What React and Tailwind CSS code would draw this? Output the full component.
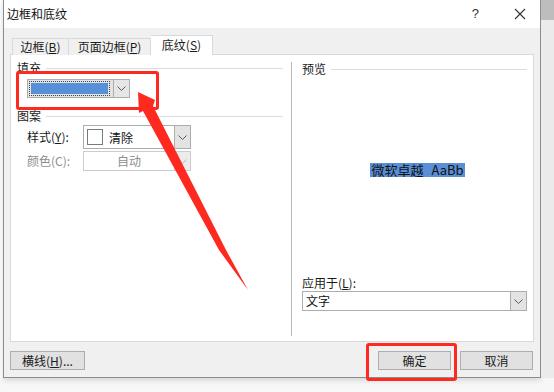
import React from "react";

const FONT = "font-['Noto_Sans_CJK_SC','Liberation_Sans',sans-serif]";

// small dropdown chevron
function Chevron({ disabled }) {
  return (
    <svg width="9" height="5" viewBox="0 0 9 5">
      <path
        d="M0.5 0.5 L4.5 4.5 L8.5 0.5"
        fill="none"
        stroke={disabled ? "#b8b8b8" : "#5a5a5a"}
        strokeWidth="1"
      />
    </svg>
  );
}

function ChevronBox({ disabled }) {
  return (
    <div
      className={`w-[16px] h-full flex items-center justify-center border-l ${
        disabled ? "border-[#d0d0d0] bg-[#ececec]" : "border-[#adadad] bg-[#e3e3e3]"
      }`}
    >
      <Chevron disabled={disabled} />
    </div>
  );
}

function GroupLabel({ children, lineRight }) {
  return (
    <div className="flex items-center h-[14px]">
      <span className="text-[12px] leading-[14px] text-[#1a1a1a]">{children}</span>
      <div className={`flex-1 h-px bg-[#dcdcdc] ml-[5px] ${lineRight}`} />
    </div>
  );
}

function Button({ children, width }) {
  return (
    <div
      className={`${width} h-[19px] bg-[#e1e1e1] border border-[#adadad] flex items-center justify-center text-[12px] leading-[14px] text-[#1a1a1a]`}
    >
      {children}
    </div>
  );
}

export default function App() {
  return (
    <div className={`relative w-[554px] h-[392px] overflow-hidden bg-[#f7f7f7] ${FONT}`}>
      <div className="flex h-[378px]">
        {/* page behind, left edge */}
        <div className="w-[3px] bg-white" />

        {/* Dialog */}
        <div className="w-[538px] h-[378px] flex flex-col border-l border-r border-b border-[#8c8c8c] bg-[#f0f0f0] shadow-[0_2px_6px_rgba(0,0,0,0.15)]">
          {/* Title bar */}
          <div className="h-[28px] bg-white flex items-center pl-[3px] pr-[14px] shrink-0">
            <span className="text-[12px] leading-[14px] text-[#111]">边框和底纹</span>
            <div className="flex-1" />
            <span className="text-[13px] leading-[14px] text-[#333] font-['Liberation_Sans',sans-serif] mr-[35px]">?</span>
            <svg width="12" height="12" viewBox="0 0 12 12">
              <path d="M1 1 L11 11 M11 1 L1 11" stroke="#333" strokeWidth="1.1" />
            </svg>
          </div>

          {/* Body */}
          <div className="flex-1 flex flex-col px-[6px]">
            {/* Tabs */}
            <div className="flex items-end ml-[2px] mt-[7px] h-[20px] -mb-px relative z-10">
              <div className="h-[17px] w-[57px] border border-b-0 border-[#d9d9d9] bg-[#f0f0f0] flex items-center justify-center text-[12px] leading-[14px] text-[#1a1a1a]">
                边框(<span className="underline">B</span>)
              </div>
              <div className="h-[17px] w-[82px] border border-b-0 border-l-0 border-[#d9d9d9] bg-[#f0f0f0] flex items-center justify-center text-[12px] leading-[14px] text-[#1a1a1a]">
                页面边框(<span className="underline">P</span>)
              </div>
              <div className="h-[20px] w-[62px] border border-b-0 border-l-0 border-[#d9d9d9] bg-white flex items-center justify-center text-[12px] leading-[14px] text-[#1a1a1a] pb-[2px]">
                底纹(<span className="underline">S</span>)
              </div>
            </div>

            {/* Panel */}
            <div className="h-[288px] bg-white border border-[#d9d9d9] flex">
              {/* Left column */}
              <div className="w-[280px] flex flex-col pl-[6px]">
                <div className="mt-[6px]">
                  <GroupLabel lineRight="mr-[8px]">填充</GroupLabel>
                </div>
                <div className="ml-[10px] mt-[4px] w-[103px] h-[19px] border border-[#adadad] bg-[#e3e3e3] flex items-stretch">
                  <div className="flex-1 m-px border border-dotted border-[#444] p-px">
                    <div className="w-full h-full bg-[#5590d9]" />
                  </div>
                  <div className="w-[16px] ml-[2px] flex items-center justify-center border-l border-[#adadad] bg-[#e6e6e6]">
                    <Chevron />
                  </div>
                </div>

                <div className="mt-[11px]">
                  <GroupLabel lineRight="mr-[8px]">图案</GroupLabel>
                </div>

                <div className="flex items-center ml-[10px] mt-[2px]">
                  <span className="w-[56px] text-[12px] leading-[14px] text-[#1a1a1a]">
                    样式(<span className="underline">Y</span>):
                  </span>
                  <div className="w-[108px] h-[24px] border border-[#adadad] bg-white flex items-stretch">
                    <div className="flex-1 flex items-center pl-[3px]">
                      <div className="w-[16px] h-[16px] border border-[#7a7a7a]" />
                      <span className="ml-[6px] mt-[2px] text-[12px] leading-[14px] text-[#111]">清除</span>
                    </div>
                    <ChevronBox />
                  </div>
                </div>

                <div className="flex items-center ml-[10px] mt-[2px]">
                  <span className="w-[56px] text-[12px] leading-[14px] text-[#8d8d8d]">颜色(C):</span>
                  <div className="w-[108px] h-[20px] border border-[#cccccc] bg-white flex items-stretch">
                    <div className="flex-1 flex items-center justify-center text-[12px] leading-[14px] text-[#8d8d8d]">
                      自动
                    </div>
                    <ChevronBox disabled />
                  </div>
                </div>
              </div>

              {/* Separator */}
              <div className="w-px bg-[#b9b9b9] mt-[7px] mb-[5px]" />

              {/* Right column */}
              <div className="flex-1 flex flex-col pl-[10px] pr-[6px]">
                <div className="mt-[7px]">
                  <GroupLabel lineRight="">预览</GroupLabel>
                </div>
                <div className="mt-[87px] flex justify-center pl-[6px]">
                  <span className="bg-[#5a8fd7] text-[13px] leading-[14px] text-[#111] px-px">
                    微软卓越<span className="inline-block w-[8px]" />AaBb
                  </span>
                </div>
                <div className="mt-[99px] text-[12px] leading-[14px] text-[#1a1a1a]">
                  应用于(<span className="underline">L</span>):
                </div>
                <div className="mt-px h-[20px] border border-[#adadad] bg-white flex items-stretch">
                  <div className="flex-1 flex items-center pl-[3px] text-[12px] leading-[14px] text-[#111]">
                    文字
                  </div>
                  <ChevronBox />
                </div>
              </div>
            </div>

            {/* Bottom buttons */}
            <div className="flex items-center mt-[9px]">
              <Button width="w-[75px]">
                <span>
                  横线(<span className="underline">H</span>)...
                </span>
              </Button>
              <div className="flex-1" />
              <Button width="w-[73px]">确定</Button>
              <div className="w-[9px]" />
              <Button width="w-[73px]">取消</Button>
              <div className="w-[1px]" />
            </div>
          </div>
        </div>

        {/* page behind, right edge */}
        <div className="flex-1 flex flex-col">
          <div className="h-[20px] bg-[#bdbdbd]" />
          <div className="flex-1 bg-[#ebebeb]" />
        </div>
      </div>

      {/* Red annotations */}
      <div className="absolute left-[16px] top-[71px] w-[143px] h-[39px] border-[3px] border-[#ff2a1f] rounded-[3px] pointer-events-none" />
      <div className="absolute left-[366px] top-[343px] w-[91px] h-[38px] border-[3px] border-[#ff2a1f] rounded-[3px] pointer-events-none" />
      <svg
        className="absolute left-0 top-0 pointer-events-none"
        width="554"
        height="392"
        viewBox="0 0 554 392"
      >
        <polygon
          points="138,92 155,100 153,106 226,250 248,290 219,250 143,111 139,113"
          fill="#ff2a1f"
        />
      </svg>
    </div>
  );
}
